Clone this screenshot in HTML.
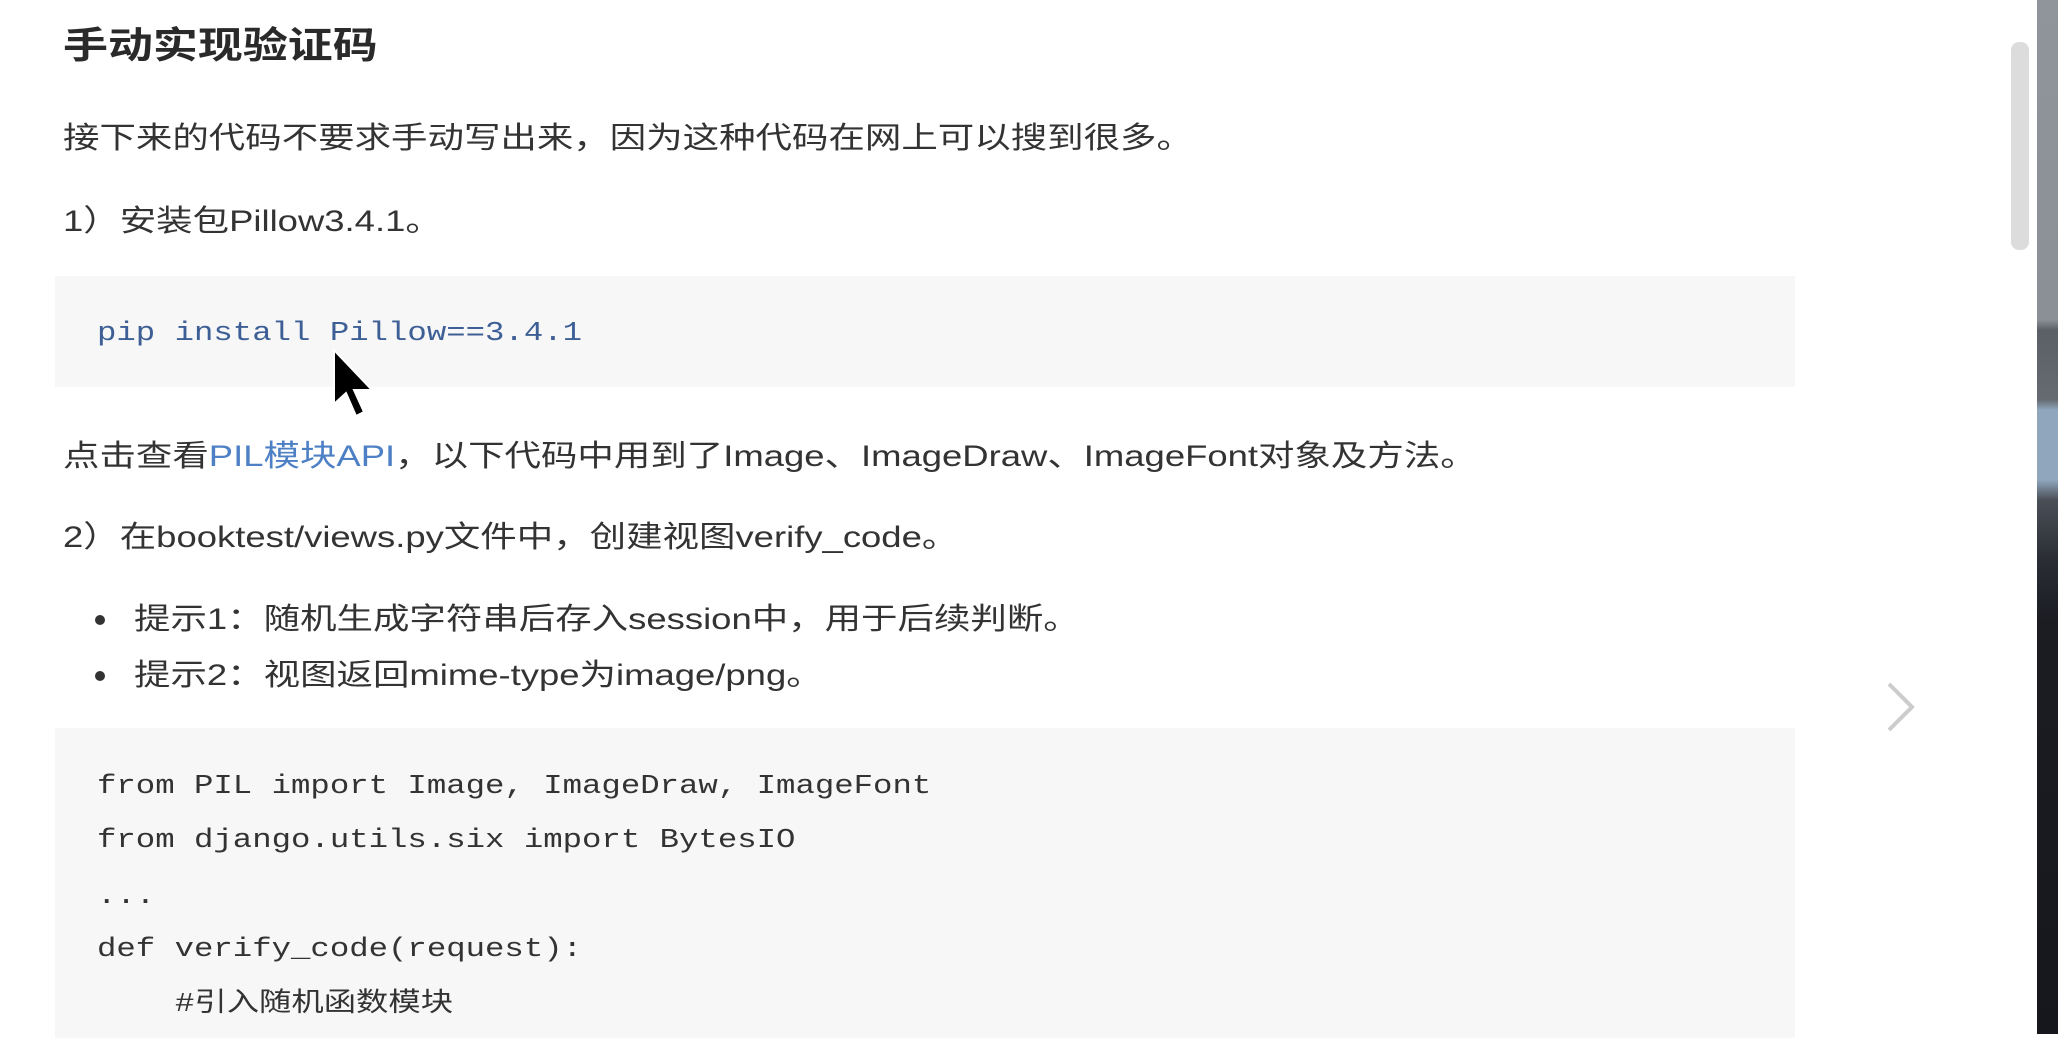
<!DOCTYPE html>
<html><head><meta charset="utf-8"><style>
html,body{margin:0;padding:0;}
body{width:2058px;height:1034px;overflow:hidden;background:#fff;position:relative;font-family:"Liberation Sans","Noto Sans CJK SC",sans-serif;color:#333;}
.t{position:absolute;white-space:nowrap;transform:scaleX(1.215);transform-origin:left center;line-height:1;}
.b{font-size:30px;}
.m{font-family:"Liberation Mono","Noto Sans CJK SC",monospace;font-size:26.5px;color:#333;transform:scaleX(1.22);}
.code{position:absolute;background:#f7f7f7;}
</style></head><body>
<div class="t" style="left:63px;top:27px;font-size:37px;font-weight:bold;color:#2a2a2a">手动实现验证码</div>
<div class="t b" style="left:63px;top:124px">接下来的代码不要求手动写出来，因为这种代码在网上可以搜到很多。</div>
<div class="t b" style="left:63px;top:207px">1）安装包Pillow3.4.1。</div>
<div class="code" style="left:55px;top:276px;width:1740px;height:111px"></div>
<div class="t m" style="left:97px;top:320px;color:#3d5f95">pip install Pillow==3.4.1</div>
<div class="t b" style="left:63px;top:442px">点击查看<span style="color:#4d80c4">PIL模块API</span>，以下代码中用到了Image、ImageDraw、ImageFont对象及方法。</div>
<div class="t b" style="left:63px;top:523px">2）在booktest/views.py文件中，创建视图verify_code。</div>
<div style="position:absolute;left:95px;top:615px;width:10px;height:10px;border-radius:50%;background:#333"></div>
<div class="t b" style="left:134px;top:605px">提示1：随机生成字符串后存入session中，用于后续判断。</div>
<div style="position:absolute;left:95px;top:671px;width:10px;height:10px;border-radius:50%;background:#333"></div>
<div class="t b" style="left:134px;top:661px">提示2：视图返回mime-type为image/png。</div>
<div class="code" style="left:55px;top:728px;width:1740px;height:310px"></div>
<div class="t m" style="left:97px;top:773px">from PIL import Image, ImageDraw, ImageFont</div>
<div class="t m" style="left:97px;top:827px">from django.utils.six import BytesIO</div>
<div class="t m" style="left:97px;top:883px">...</div>
<div class="t m" style="left:97px;top:936px">def verify_code(request):</div>
<div class="t m" style="left:175px;top:991px">#引入随机函数模块</div>
<svg style="position:absolute;left:330px;top:348px" width="50" height="80" viewBox="0 0 50 80"><path d="M4 2 L4 56 L16 45 L26 68 L34 64 L24 42 L42 42 Z" fill="#000" stroke="#fff" stroke-width="2"/></svg>
<svg style="position:absolute;left:1884px;top:680px" width="34" height="54"><path d="M5 4 L28 27 L5 50" fill="none" stroke="#ccc" stroke-width="4"/></svg>
<div style="position:absolute;left:2011px;top:42px;width:18px;height:208px;border-radius:8px;background:#dcdcdc"></div>
<div style="position:absolute;left:2037px;top:0;width:21px;height:1034px;background:linear-gradient(#8f959b 0,#8a9096 320px,#5b6067 330px,#666b72 400px,#8fa6bd 410px,#8fa6bd 480px,#4a4f57 500px,#2a2d34 560px,#1b1d23 620px,#15171c 1034px)"></div>
</body></html>
